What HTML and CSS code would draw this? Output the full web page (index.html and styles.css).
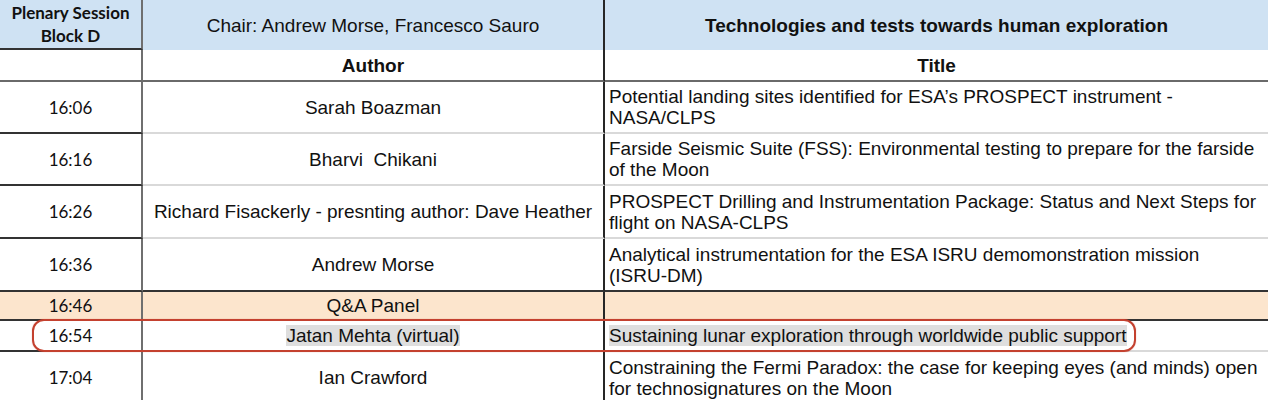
FILE: index.html
```html
<!DOCTYPE html>
<html lang="en">
<head>
<meta charset="utf-8">
<title>Plenary Session Block D</title>
<link rel="stylesheet" href="styles.css">
</head>
<body>
<div class="sheet">
  <div class="row row-head">
    <div class="cell c1 cal bold">Plenary Session<br>Block D</div>
    <div class="cell c2">Chair: Andrew Morse, Francesco Sauro</div>
    <div class="cell c3 center bold">Technologies and tests towards human exploration</div>
  </div>
  <div class="row row-cols">
    <div class="cell c1"></div>
    <div class="cell c2 bold">Author</div>
    <div class="cell c3 center bold">Title</div>
  </div>
  <div class="row row-a">
    <div class="cell c1 cal">16:06</div>
    <div class="cell c2">Sarah Boazman</div>
    <div class="cell c3">Potential landing sites identified for ESA’s PROSPECT instrument -<br>NASA/CLPS</div>
  </div>
  <div class="row row-a">
    <div class="cell c1 cal">16:16</div>
    <div class="cell c2">Bharvi&nbsp; Chikani</div>
    <div class="cell c3">Farside Seismic Suite (FSS): Environmental testing to prepare for the farside<br>of the Moon</div>
  </div>
  <div class="row row-b">
    <div class="cell c1 cal">16:26</div>
    <div class="cell c2">Richard Fisackerly - presnting author: Dave Heather</div>
    <div class="cell c3">PROSPECT Drilling and Instrumentation Package: Status and Next Steps for<br>flight on NASA-CLPS</div>
  </div>
  <div class="row row-b row-dark">
    <div class="cell c1 cal">16:36</div>
    <div class="cell c2">Andrew Morse</div>
    <div class="cell c3">Analytical instrumentation for the ESA ISRU demomonstration mission<br>(ISRU-DM)</div>
  </div>
  <div class="row row-qa">
    <div class="cell c1 cal">16:46</div>
    <div class="cell c2">Q&amp;A Panel</div>
    <div class="cell c3"></div>
  </div>
  <div class="row row-sel">
    <div class="cell c1 cal">16:54</div>
    <div class="cell c2"><span class="hl">Jatan Mehta (virtual)</span></div>
    <div class="cell c3"><span class="hl">Sustaining lunar exploration through worldwide public support</span></div>
  </div>
  <div class="row row-b">
    <div class="cell c1 cal">17:04</div>
    <div class="cell c2">Ian Crawford</div>
    <div class="cell c3">Constraining the Fermi Paradox: the case for keeping eyes (and minds) open<br>for technosignatures on the Moon</div>
  </div>
  <div class="marker"></div>
</div>
</body>
</html>
```

FILE: styles.css
```css
html, body {
  margin: 0;
  padding: 0;
  background: #ffffff;
}

body {
  width: 1268px;
  height: 400px;
  overflow: hidden;
  font-family: "Liberation Sans", Arial, sans-serif;
  font-size: 19px;
  color: #111;
}

.sheet {
  position: relative;
  width: 1268px;
}

.row {
  display: grid;
  grid-template-columns: 143px 462px 663px;
}

.cell {
  box-sizing: border-box;
  display: flex;
  align-items: center;
  justify-content: center;
  text-align: center;
  border-bottom: 2px solid #d9d9d9;
  line-height: 21px;
  white-space: nowrap;
}

.c1 {
  border-right: 2px solid #6f6f6f;
  border-bottom-color: #333;
}

.c2 {
  border-right: 2px solid #262626;
}

.c3 {
  justify-content: flex-start;
  text-align: left;
  padding-left: 4px;
}

.c3.center {
  justify-content: center;
  text-align: center;
  padding-left: 0;
}

.cal {
  font-family: Lato, "Liberation Sans", sans-serif;
  font-size: 17px;
}

.bold {
  font-weight: bold;
}

.row-head {
  height: 50px;
  background: #cfe2f3;
}

.row-head .cell {
  border-bottom: none;
}

.row-head .c1 {
  border-bottom: 2px solid #333;
  line-height: 23px;
}

.row-cols {
  height: 32px;
}

.row-cols .cell {
  border-bottom: 2px solid #6a6a6a;
}

.row-a {
  height: 52px;
}

.row-b {
  height: 53px;
}

.row-dark .cell {
  border-bottom-color: #333;
}

.row-qa {
  height: 29px;
  background: #fce5cd;
}

.row-qa .cell {
  border-bottom-color: #333;
}

.row-sel {
  height: 31px;
}

.hl {
  background: #dedede;
}

.marker {
  position: absolute;
  left: 32px;
  top: 319px;
  width: 1104px;
  height: 33px;
  box-sizing: border-box;
  border: 2px solid #c4412f;
  border-radius: 12px;
  box-shadow: 0 0 1px rgba(196, 65, 47, 0.6);
}
```
